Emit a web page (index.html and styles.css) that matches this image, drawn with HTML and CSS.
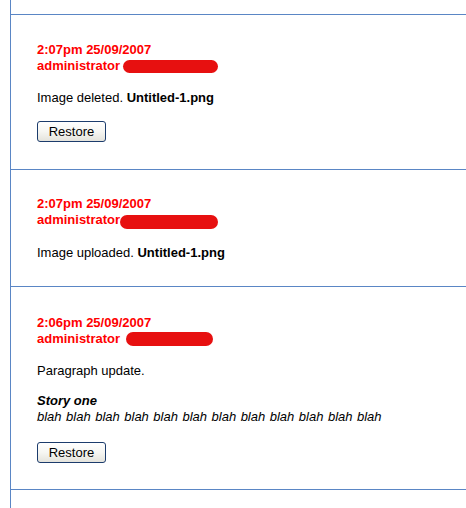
FILE: index.html
```html
<!DOCTYPE html>
<html>
<head>
<meta charset="utf-8">
<link rel="stylesheet" href="styles.css">
</head>
<body>
<div class="history">
  <div class="entry entry-a">
    <div class="meta">
      <div>2:07pm 25/09/2007</div>
      <div>administrator <span class="redact redact-a"></span></div>
    </div>
    <p class="desc">Image deleted. <b>Untitled-1.png</b></p>
    <div class="actions"><button class="btn">Restore</button></div>
  </div>
  <div class="entry entry-b">
    <div class="meta">
      <div>2:07pm 25/09/2007</div>
      <div>administrator<span class="redact redact-b"></span></div>
    </div>
    <p class="desc">Image uploaded. <b>Untitled-1.png</b></p>
  </div>
  <div class="entry entry-c">
    <div class="meta">
      <div>2:06pm 25/09/2007</div>
      <div>administrator <span class="redact redact-c"></span></div>
    </div>
    <p class="desc">Paragraph update.</p>
    <div class="story">
      <div class="story-title">Story one</div>
      <div class="story-body">blah blah blah blah blah blah blah blah blah blah blah blah</div>
    </div>
    <div class="actions"><button class="btn">Restore</button></div>
  </div>
  <div class="entry entry-empty"></div>
</div>
</body>
</html>
```

FILE: styles.css
```css
html, body {
  margin: 0;
  padding: 0;
  background: #ffffff;
}

body {
  font-family: "Liberation Sans", Arial, sans-serif;
  font-size: 13px;
  line-height: 16px;
  color: #000000;
}

.history {
  margin-left: 10px;
  border-left: 1px solid #5a86c5;
  padding-top: 14px;
  min-height: 600px;
}

.entry {
  border-top: 1px solid #5a86c5;
  padding: 26px 0 26px 26px;
}

.entry-a {
  padding-top: 27px;
  padding-bottom: 27px;
}

.entry-b {
  padding-bottom: 25px;
}

.entry-c {
  padding-top: 28px;
  padding-bottom: 26px;
}

.entry-empty {
  padding: 0;
  height: 40px;
}

.meta {
  color: #ff0000;
  font-weight: bold;
}

.redact {
  display: inline-block;
  height: 13px;
  background: #e71010;
  border-radius: 7px;
  vertical-align: -3px;
}

.redact-a {
  width: 95px;
  margin-left: -1px;
}

.redact-b {
  width: 98px;
  height: 14px;
  vertical-align: -5px;
}

.redact-c {
  width: 87px;
  height: 14px;
  vertical-align: -3px;
  margin-left: 2px;
}

.desc {
  margin: 16px 0 0;
}

.story {
  margin-top: 14px;
  font-style: italic;
}

.story-title {
  font-weight: bold;
}

.story-body {
  word-spacing: 0.9px;
}

.actions {
  margin-top: 15px;
}

.story + .actions {
  margin-top: 17px;
}

.btn {
  display: block;
  box-sizing: border-box;
  width: 69px;
  height: 21px;
  padding: 0;
  margin: 0;
  font-family: "Liberation Sans", Arial, sans-serif;
  font-size: 13px;
  line-height: 17px;
  color: #000000;
  border: 1px solid #1c3c6c;
  border-radius: 3px;
  background: linear-gradient(#ffffff, #f6f6f2 50%, #e4e3dc);
}
```
